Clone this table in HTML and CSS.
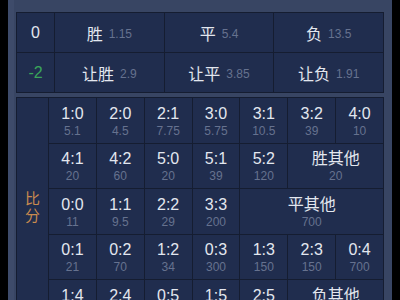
FILE: index.html
```html
<!DOCTYPE html>
<html lang="zh">
<head>
<meta charset="utf-8">
<link rel="stylesheet" href="styles.css">
</head>
<body>
<div class="panel">
  <div class="result-table">
    <div class="cell hcap">0</div>
    <div class="cell"><span class="name">胜</span><span class="odd">1.15</span></div>
    <div class="cell"><span class="name">平</span><span class="odd">5.4</span></div>
    <div class="cell"><span class="name">负</span><span class="odd">13.5</span></div>
    <div class="cell hcap green">-2</div>
    <div class="cell"><span class="name">让胜</span><span class="odd">2.9</span></div>
    <div class="cell"><span class="name">让平</span><span class="odd">3.85</span></div>
    <div class="cell"><span class="name">让负</span><span class="odd">1.91</span></div>
  </div>

  <div class="score-table">
    <div class="side"><span>比</span><span>分</span></div>

    <div class="sc"><span class="s">1:0</span><span class="o">5.1</span></div>
    <div class="sc"><span class="s">2:0</span><span class="o">4.5</span></div>
    <div class="sc"><span class="s">2:1</span><span class="o">7.75</span></div>
    <div class="sc"><span class="s">3:0</span><span class="o">5.75</span></div>
    <div class="sc"><span class="s">3:1</span><span class="o">10.5</span></div>
    <div class="sc"><span class="s">3:2</span><span class="o">39</span></div>
    <div class="sc"><span class="s">4:0</span><span class="o">10</span></div>

    <div class="sc"><span class="s">4:1</span><span class="o">20</span></div>
    <div class="sc"><span class="s">4:2</span><span class="o">60</span></div>
    <div class="sc"><span class="s">5:0</span><span class="o">20</span></div>
    <div class="sc"><span class="s">5:1</span><span class="o">39</span></div>
    <div class="sc"><span class="s">5:2</span><span class="o">120</span></div>
    <div class="sc span2"><span class="s">胜其他</span><span class="o">20</span></div>

    <div class="sc"><span class="s">0:0</span><span class="o">11</span></div>
    <div class="sc"><span class="s">1:1</span><span class="o">9.5</span></div>
    <div class="sc"><span class="s">2:2</span><span class="o">29</span></div>
    <div class="sc"><span class="s">3:3</span><span class="o">200</span></div>
    <div class="sc span3"><span class="s">平其他</span><span class="o">700</span></div>

    <div class="sc"><span class="s">0:1</span><span class="o">21</span></div>
    <div class="sc"><span class="s">0:2</span><span class="o">70</span></div>
    <div class="sc"><span class="s">1:2</span><span class="o">34</span></div>
    <div class="sc"><span class="s">0:3</span><span class="o">300</span></div>
    <div class="sc"><span class="s">1:3</span><span class="o">150</span></div>
    <div class="sc"><span class="s">2:3</span><span class="o">150</span></div>
    <div class="sc"><span class="s">0:4</span><span class="o">700</span></div>

    <div class="sc"><span class="s">1:4</span><span class="o">500</span></div>
    <div class="sc"><span class="s">2:4</span><span class="o">500</span></div>
    <div class="sc"><span class="s">0:5</span><span class="o">800</span></div>
    <div class="sc"><span class="s">1:5</span><span class="o">800</span></div>
    <div class="sc"><span class="s">2:5</span><span class="o">800</span></div>
    <div class="sc span2"><span class="s">负其他</span><span class="o">300</span></div>
  </div>
</div>
</body>
</html>
```

FILE: styles.css
```css
html, body {
  margin: 0;
  padding: 0;
  background: #000;
  height: 300px;
  overflow: hidden;
  font-family: "Liberation Sans", "Noto Sans CJK SC", sans-serif;
}

.panel {
  margin-left: 8px;
  width: 377px;
  height: 300px;
  padding: 12px 8px 0 8px;
  box-sizing: content-box;
  width: 368px;
  background: #384563;
  box-shadow: inset 6px 0 0 #3e4b6a;
  overflow: hidden;
}

.result-table {
  display: grid;
  grid-template-columns: 37px 1fr 1fr 1fr;
  grid-auto-rows: 39px;
  gap: 1px;
  border: 1px solid #151d31;
  background: #151d31;
}

.cell {
  background: #202d4e;
  display: flex;
  align-items: center;
  justify-content: center;
  color: #e3e7ef;
  font-size: 16px;
}

.cell .name {
  font-size: 16px;
  color: #e3e7ef;
}

.cell .odd {
  font-size: 12px;
  color: #66728f;
  margin-left: 6px;
  margin-top: 2px;
}

.green {
  color: #3aa55a;
}

.score-table {
  margin-top: 4px;
  display: grid;
  grid-template-columns: 31px repeat(7, 1fr);
  grid-auto-rows: 44.5px;
  gap: 1px;
  border: 1px solid #151d31;
  background: #151d31;
}

.side {
  grid-row: span 5;
  background: #202d4e;
  display: flex;
  flex-direction: column;
  align-items: center;
  justify-content: center;
  color: #c98a4e;
  font-size: 15px;
  line-height: 17px;
  padding-bottom: 8px;
}

.sc {
  background: #202d4e;
  display: flex;
  flex-direction: column;
  align-items: center;
  justify-content: center;
  padding-top: 3px;
}

.sc .s {
  color: #e3e7ef;
  font-size: 16px;
  line-height: 18px;
}

.sc .o {
  color: #66728f;
  font-size: 12px;
  line-height: 16px;
}

.span2 {
  grid-column: span 2;
}

.span3 {
  grid-column: span 3;
}
```
